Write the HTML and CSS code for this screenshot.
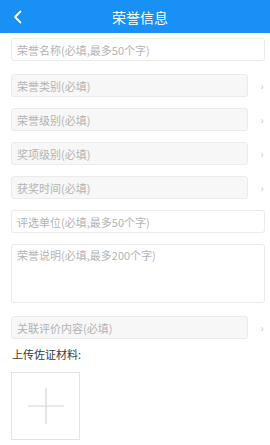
FILE: index.html
```html
<!DOCTYPE html>
<html lang="zh-CN">
<head>
    <meta charset="UTF-8">
    <meta name="viewport" content="width=device-width, initial-scale=1.0">
    <title>荣誉信息</title>
    <link rel="stylesheet" href="styles.css">
</head>
<body>
    <div class="container">
        <div class="header">
            <div class="back-btn">
                <svg width="10" height="14" viewBox="0 0 10 14" fill="none" xmlns="http://www.w3.org/2000/svg">
                    <path d="M7.5 1.5L2 7L7.5 12.5" stroke="#fff" stroke-width="1.8" stroke-linecap="round" stroke-linejoin="round"/>
                </svg>
            </div>
            <div class="header-title">荣誉信息</div>
        </div>

        <div class="form">
            <div class="form-row first">
                <input type="text" class="form-input" placeholder="荣誉名称(必填,最多50个字)">
            </div>

            <div class="form-row select">
                <div class="form-select">荣誉类别(必填)</div>
                <div class="arrow">›</div>
            </div>

            <div class="form-row select">
                <div class="form-select">荣誉级别(必填)</div>
                <div class="arrow">›</div>
            </div>

            <div class="form-row select">
                <div class="form-select">奖项级别(必填)</div>
                <div class="arrow">›</div>
            </div>

            <div class="form-row select">
                <div class="form-select">获奖时间(必填)</div>
                <div class="arrow">›</div>
            </div>

            <div class="form-row">
                <input type="text" class="form-input" placeholder="评选单位(必填,最多50个字)">
            </div>

            <div class="form-row area">
                <textarea class="form-textarea" placeholder="荣誉说明(必填,最多200个字)"></textarea>
            </div>

            <div class="form-row select last">
                <div class="form-select">关联评价内容(必填)</div>
                <div class="arrow">›</div>
            </div>

            <!-- 上传区域 -->
            <div class="upload-label">上传佐证材料:</div>
            <div class="upload-box">
                <svg width="38" height="38" viewBox="0 0 38 38" xmlns="http://www.w3.org/2000/svg">
                    <path d="M19 1V37M1 19H37" stroke="#d4d4d4" stroke-width="1.2"/>
                </svg>
            </div>
        </div>
    </div>
</body>
</html>
```

FILE: styles.css
```css
* {
    margin: 0;
    padding: 0;
    box-sizing: border-box;
    font-family: 'Noto Sans CJK SC', 'Noto Sans', sans-serif;
}

body {
    background-color: #fff;
    color: #333;
}

.container {
    width: 100%;
    min-height: 100vh;
    background-color: #fff;
}

.header {
    height: 33px;
    background-color: #1990f6;
    display: flex;
    align-items: center;
    justify-content: center;
    position: relative;
}

.header-title {
    color: #fff;
    font-size: 14px;
    padding-left: 10px;
}

.back-btn {
    position: absolute;
    left: 13px;
    top: 10px;
    display: flex;
}

.form {
    padding: 5px 5px 0 11px;
}

.form-row {
    display: flex;
    align-items: center;
    height: 23px;
    margin-bottom: 11px;
}

.form-row.first {
    margin-bottom: 13px;
}

.form-row.area {
    height: 59px;
    margin-bottom: 13px;
}

.form-row.last {
    margin-bottom: 7px;
}

.form-input,
.form-select,
.form-textarea {
    height: 100%;
    border: 1px solid #ebebeb;
    border-radius: 3px;
    font-size: 11px;
    color: #b3b3b3;
    outline: none;
}

.form-input {
    width: 100%;
    padding: 0 5px;
    background-color: #fff;
}

.form-textarea {
    width: 100%;
    padding: 3px 5px;
    resize: none;
    background-color: #fff;
    line-height: 15px;
}

.form-input::placeholder,
.form-textarea::placeholder {
    color: #b3b3b3;
}

.form-select {
    width: 237px;
    padding: 0 5px;
    background-color: #f7f7f7;
    display: flex;
    align-items: center;
}

.arrow {
    flex: 1;
    text-align: center;
    color: #c4c4c4;
    font-size: 10px;
    padding-left: 11px;
}

.upload-label {
    font-size: 11px;
    color: #3a3a3a;
    line-height: 16px;
    padding-left: 1px;
}

.upload-box {
    width: 69px;
    height: 68px;
    margin-top: 10px;
    border: 1px solid #e4e4e4;
    display: flex;
    align-items: center;
    justify-content: center;
}
```
